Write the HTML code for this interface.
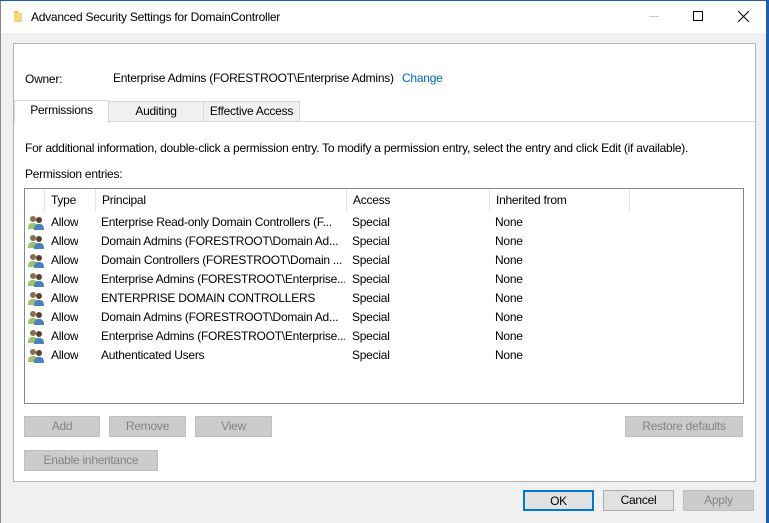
<!DOCTYPE html>
<html><head><style>
*{box-sizing:border-box;margin:0;padding:0}
body{width:769px;height:523px;background:#1a5fb4;font-family:"Liberation Sans",sans-serif;font-size:12px;letter-spacing:-0.25px;color:#000;position:relative;overflow:hidden}
.win{position:absolute;left:0;top:1px;width:766px;height:522px;background:#f0f0f0;border-left:1px solid #888}
.title{position:absolute;left:0;top:0;width:100%;height:32px;background:#fff}
.abs{position:absolute;white-space:nowrap}
.panel{position:absolute;left:12px;top:42px;width:743px;height:439px;background:#fff;border:1px solid #b4b4b4}
.btn{position:absolute;height:21px;background:#ccc;border:1px solid #bfbfbf;color:#838383;text-align:center;line-height:19px}
.tab{position:absolute;top:57px;height:21px;background:#f0f0f0;border:1px solid #d9d9d9;text-align:center;line-height:19px}
.list{position:absolute;left:10px;top:144px;width:720px;height:216px;border:1px solid #828790;background:#fff}
.hdr{position:absolute;top:0;height:23px;line-height:23px;border-right:1px solid #e5e5e5;padding-left:6px}
.row{position:absolute;left:0;height:19px;line-height:19px;width:100%}
.row span{position:absolute;white-space:nowrap;overflow:hidden}
</style></head><body>
<div class="win">
<div class="title">
<svg class="abs" style="left:12px;top:9px" width="10" height="13"><path d="M1 1h4l1 2h3v9H1z" fill="#e8c25a"/><path d="M1 3h8v9H1z" fill="#f5d77a"/></svg>
<div class="abs" style="left:30px;top:9px">Advanced Security Settings for DomainController</div>
<div class="abs" style="left:648px;top:15px;width:10px;height:1px;background:#ccc"></div>
<div class="abs" style="left:692px;top:10px;width:10px;height:10px;border:1px solid #000"></div>
<svg class="abs" style="left:737px;top:10px" width="11" height="11"><path d="M0 0L11 11M11 0L0 11" stroke="#000" stroke-width="1"/></svg>
</div>
<div class="panel">
<div class="abs" style="left:11px;top:28px">Owner:</div>
<div class="abs" style="left:99px;top:27px">Enterprise Admins (FORESTROOT\Enterprise Admins)</div>
<div class="abs" style="left:388px;top:27px;color:#0066cc">Change</div>
<div style="position:absolute;left:0;top:77px;width:741px;height:360px;border-top:1px solid #d9d9d9"></div>
<div class="tab" style="left:94px;width:96px">Auditing</div>
<div class="tab" style="left:189px;width:97px">Effective Access</div>
<div class="tab" style="left:0;top:56px;width:95px;height:23px;background:#fff;border-bottom:none">Permissions</div>
<div class="abs" style="left:11px;top:97px">For additional information, double-click a permission entry. To modify a permission entry, select the entry and click Edit (if available).</div>
<div class="abs" style="left:11px;top:123px">Permission entries:</div>
<div class="list">
<div class="hdr" style="left:0;width:20px"></div>
<div class="hdr" style="left:20px;width:51px">Type</div>
<div class="hdr" style="left:71px;width:251px">Principal</div>
<div class="hdr" style="left:322px;width:143px">Access</div>
<div class="hdr" style="left:465px;width:140px">Inherited from</div>
<div id="rows"></div>
</div>
<div class="btn" style="left:10px;top:372px;width:76px">Add</div>
<div class="btn" style="left:95px;top:372px;width:77px">Remove</div>
<div class="btn" style="left:181px;top:372px;width:77px">View</div>
<div class="btn" style="left:611px;top:372px;width:118px">Restore defaults</div>
<div class="btn" style="left:10px;top:406px;width:134px">Enable inheritance</div>
</div>
<div class="btn" style="left:522px;top:489px;width:71px;background:#e1e1e1;border:2px solid #0078d7;color:#000">OK</div>
<div class="btn" style="left:602px;top:489px;width:71px;background:#e1e1e1;border-color:#adadad;color:#000">Cancel</div>
<div class="btn" style="left:682px;top:489px;width:71px">Apply</div>
</div>
<script>
var d=[["Enterprise Read-only Domain Controllers (F..."],["Domain Admins (FORESTROOT\\Domain Ad..."],["Domain Controllers (FORESTROOT\\Domain ..."],["Enterprise Admins (FORESTROOT\\Enterprise..."],["ENTERPRISE DOMAIN CONTROLLERS"],["Domain Admins (FORESTROOT\\Domain Ad..."],["Enterprise Admins (FORESTROOT\\Enterprise..."],["Authenticated Users"]];
var h="";d.forEach(function(r,i){h+='<div class="row" style="top:'+(24+i*19)+'px"><svg style="position:absolute;left:3px;top:2px" width="17" height="15"><circle cx="5" cy="4" r="3" fill="#8a6d4a"/><path d="M0 14c0-5 2-6 5-6s5 1 5 6z" fill="#9bc36a"/><circle cx="11" cy="5" r="3" fill="#5a4030"/><path d="M6 15c0-5 2-6 5-6s5 1 5 6z" fill="#4a7fc0"/></svg><span style="left:26px">Allow</span><span style="left:76px;width:244px">'+r[0]+'</span><span style="left:327px">Special</span><span style="left:470px">None</span></div>'});
document.getElementById("rows").innerHTML=h;
</script>
</body></html>
